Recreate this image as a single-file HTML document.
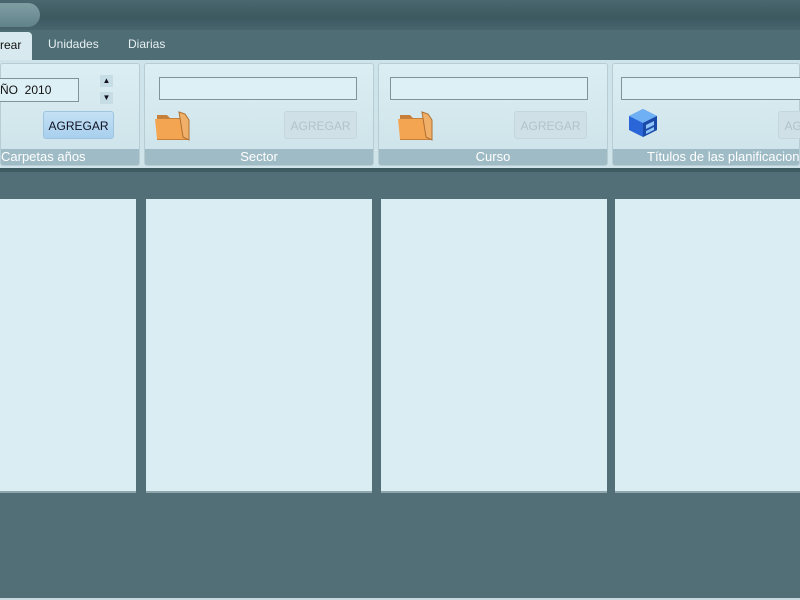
<!DOCTYPE html>
<html><head><meta charset="utf-8"><style>
*{margin:0;padding:0;box-sizing:border-box}
html,body{width:800px;height:600px;overflow:hidden}
body{background:#526f78;font-family:"Liberation Sans",sans-serif;position:relative}
.a{position:absolute}
.top{left:0;top:0;width:800px;height:30px;background:linear-gradient(#4a666e,#3d5960 60%,#48646c)}
.pill{left:0;top:3px;width:40px;height:24px;border-radius:0 12px 12px 0;background:linear-gradient(#7f9ea4,#62828a)}
.tabs{left:0;top:30px;width:800px;height:30px;background:#4f6d75}
.tab{top:37px;font-size:12px;color:#e6f0f2}
.act{left:0;top:32px;width:32px;height:28px;background:#d8eaf0;border-radius:0 4px 0 0;font-size:12px;color:#111;padding:6px 0 0 0}
.rib{left:0;top:60px;width:800px;height:108px;background:#cfe3ea}
.grp{top:63px;height:103px;border:1px solid #b8ccd3;border-radius:3px;background:linear-gradient(#dbeef3,#cde2e9);overflow:hidden}
.cap{position:absolute;left:0;right:0;bottom:0;height:16px;background:#9fbcc6;color:#fff;font-size:13px;text-align:center;line-height:15px;white-space:nowrap}
.inp{top:77px;height:23px;border:1px solid #7e949a;background:#ddf0f5}
.btn{top:111px;width:73px;height:28px;border-radius:3px;font-size:12px;text-align:center;line-height:28px;background:#cfe0e6;color:#b3c3c8;border:1px solid #c5d6dc}
.pan{top:199px;height:294px;background:#d9edf3;border-bottom:2px solid #8fa6ad}
.sh{top:168px;left:0;width:800px;height:4px;background:#3f5b62}
.clip{left:0;top:0;width:800px;height:600px;overflow:hidden}
</style></head><body>
<div class="a clip">
<div class="a top"></div><div class="a pill"></div>
<div class="a tabs"></div>
<div class="a act">rear</div>
<div class="a tab" style="left:48px">Unidades</div>
<div class="a tab" style="left:128px">Diarias</div>
<div class="a rib"></div>
<div class="a grp" style="left:0;width:140px"><div class="cap" style="text-align:left;padding-left:0">Carpetas años</div></div>
<div class="a grp" style="left:144px;width:230px"><div class="cap">Sector</div></div>
<div class="a grp" style="left:378px;width:230px"><div class="cap">Curso</div></div>
<div class="a grp" style="left:612px;width:188px"><div class="cap" style="text-align:left;padding-left:34px">Títulos de las planificacion</div></div>
<div class="a inp" style="left:0;width:79px;top:78px;height:24px;font-size:12px;line-height:22px;color:#111;border-left:none">ÑO&nbsp;&nbsp;2010</div>
<div class="a" style="left:100px;top:75px;width:13px;height:12px;background:#c6dde5;font-size:8px;text-align:center;line-height:12px;color:#112">▲</div>
<div class="a" style="left:100px;top:92px;width:13px;height:12px;background:#c6dde5;font-size:8px;text-align:center;line-height:12px;color:#112">▼</div>
<div class="a btn" style="left:43px;width:71px;background:linear-gradient(#c4e0f4,#a8d0ee);color:#112;border-color:#9dc4e0">AGREGAR</div>
<div class="a inp" style="left:159px;width:198px"></div>
<div class="a inp" style="left:390px;width:198px"></div>
<div class="a inp" style="left:621px;width:179px;border-right:none"></div>
<div class="a btn" style="left:284px">AGREGAR</div>
<div class="a btn" style="left:514px">AGREGAR</div>
<div class="a" style="left:778px;top:111px;width:22px;height:28px;overflow:hidden"><div class="a btn" style="left:0;top:0">AGREGAR</div></div>
<svg class="a" style="left:153px;top:107px" width="40" height="36"><path d="M4 8h10l3 3h18v22H4z" fill="#c7803a"/><path d="M2 12h26l8 20H4z" fill="#f3a552"/><path d="M26 5l6 2 4 6v20l-6-3z" fill="#f0b06a" stroke="#b07030"/></svg>
<svg class="a" style="left:396px;top:107px" width="40" height="36"><path d="M4 8h10l3 3h18v22H4z" fill="#c7803a"/><path d="M2 12h26l8 20H4z" fill="#f3a552"/><path d="M26 5l6 2 4 6v20l-6-3z" fill="#f0b06a" stroke="#b07030"/></svg>
<svg class="a" style="left:627px;top:107px" width="32" height="32"><path d="M2 9l14-7 14 7v14l-14 7-14-7z" fill="#2a66d8"/><path d="M2 9l14-7 14 7-14 7z" fill="#6fb0f4"/><path d="M16 16l14-7v14l-14 7z" fill="#1a4aa8"/><path d="M19 18l8-4v4l-8 4zM19 24l8-4v3l-8 4z" fill="#8fc4f8"/></svg>
<div class="a sh"></div>
<div class="a pan" style="left:0;width:136px"></div>
<div class="a pan" style="left:146px;width:226px"></div>
<div class="a pan" style="left:381px;width:226px"></div>
<div class="a pan" style="left:615px;width:185px"></div>
<div class="a" style="left:0;top:598px;width:800px;height:2px;background:#c8dbe0"></div>
</div>
</body></html>
